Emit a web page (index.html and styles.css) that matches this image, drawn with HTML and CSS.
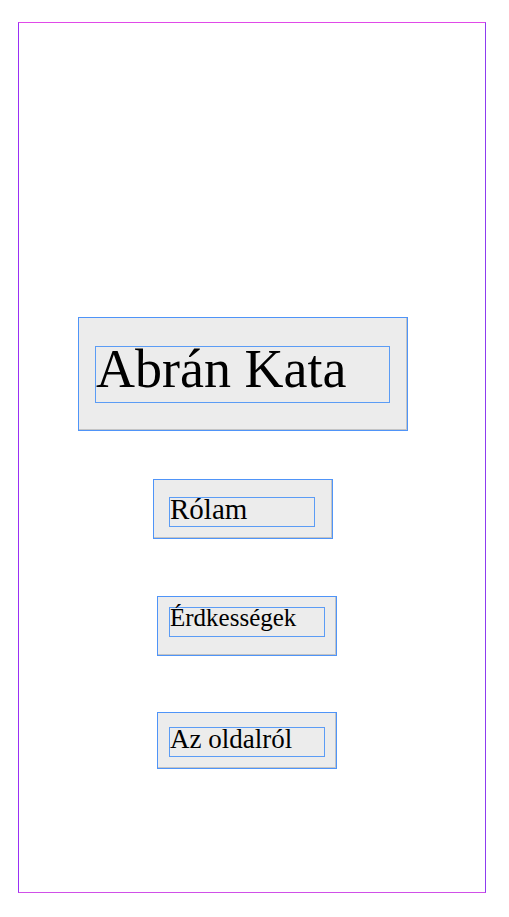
FILE: index.html
```html
<!DOCTYPE html>
<html lang="hu">
<head>
<meta charset="utf-8">
<title>Abrán Kata</title>
<link rel="stylesheet" href="styles.css">
</head>
<body>
<div class="frame">
  <div class="box box-title"><div class="label label-title">Abrán Kata</div></div>
  <div class="box box-about"><div class="label label-about">Rólam</div></div>
  <div class="box box-interests"><div class="label label-interests">Érdkességek</div></div>
  <div class="box box-site"><div class="label label-site">Az oldalról</div></div>
</div>
</body>
</html>
```
FILE: styles.css
```css
html, body {
  margin: 0;
  padding: 0;
  background: #ffffff;
}
body {
  font-family: "Liberation Serif", "DejaVu Serif", serif;
  color: #000;
}
.frame {
  box-sizing: border-box;
  margin: 22px 0 0 18px;
  width: 468px;
  height: 871px;
  border: 1px solid;
  border-color: #e04ae8 #8d3cf0 #d050e8 #9a30f5;
  display: flex;
  flex-direction: column;
  align-items: flex-start;
}
.box {
  box-sizing: border-box;
  background: #ececec;
  border: 1px solid #4f94f8;
  box-shadow: inset -1px -1px 0 #c4c4c4;
}
.label {
  box-sizing: border-box;
  border: 1px solid #5b9cf5;
  white-space: nowrap;
  overflow: visible;
}
.box-title {
  margin: 294px 0 0 59px;
  width: 330px;
  height: 114px;
  padding: 28px 0 0 16px;
}
.label-title {
  width: 295px;
  height: 57px;
  font-size: 54px;
  line-height: 45px;
}
.box-about {
  margin: 48px 0 0 134px;
  width: 180px;
  height: 60px;
  padding: 17px 0 0 15px;
}
.label-about {
  width: 146px;
  height: 30px;
  font-size: 29px;
  line-height: 23px;
}
.box-interests {
  margin: 57px 0 0 138px;
  width: 180px;
  height: 60px;
  padding: 10px 0 0 11px;
}
.label-interests {
  width: 156px;
  height: 30px;
  font-size: 25px;
  line-height: 20px;
}
.box-site {
  margin: 56px 0 0 138px;
  width: 180px;
  height: 57px;
  padding: 14px 0 0 11px;
}
.label-site {
  width: 156px;
  height: 30px;
  font-size: 27px;
  line-height: 23px;
}
```
